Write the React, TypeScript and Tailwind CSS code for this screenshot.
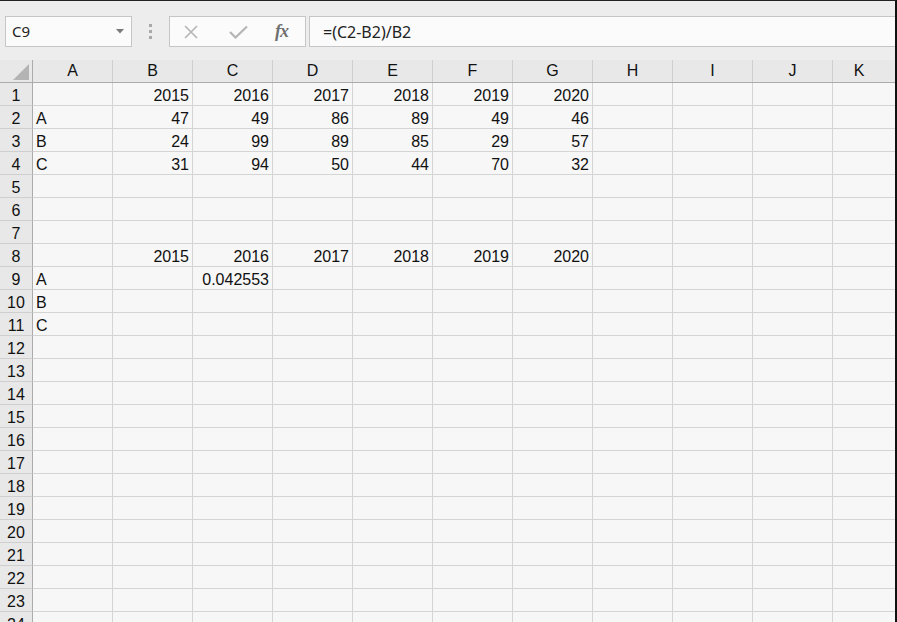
import React from 'react';

const cols = ['A', 'B', 'C', 'D', 'E', 'F', 'G', 'H', 'I', 'J'];

// cell values keyed by row number; index 0 is column A
const data: Record<number, string[]> = {
    1: ['', '2015', '2016', '2017', '2018', '2019', '2020'],
    2: ['A', '47', '49', '86', '89', '49', '46'],
    3: ['B', '24', '99', '89', '85', '29', '57'],
    4: ['C', '31', '94', '50', '44', '70', '32'],
    8: ['', '2015', '2016', '2017', '2018', '2019', '2020'],
    9: ['A', '', '0.042553'],
    10: ['B'],
    11: ['C'],
};

const rows = Array.from({ length: 24 }, (_, i) => i + 1);

const isNumber = (v: string) => v !== '' && !isNaN(Number(v));

function Cell({ value }: { value?: string }) {
    const v = value ?? '';
    return (
        <div
            className={`w-[80px] h-[23px] shrink-0 border-r border-b border-[#d4d4d4] flex items-end leading-none pb-px px-[3px] text-[16px] text-[#111] whitespace-nowrap ${
                isNumber(v) ? 'justify-end' : 'justify-start'
            }`}
        >
            {v}
        </div>
    );
}

export default function App() {
    return (
        <div className="w-[897px] h-[622px] overflow-hidden bg-[#f7f7f7] border-t border-[#222] border-r-2 border-r-[#111] font-['Liberation_Sans',Arial,sans-serif] flex flex-col">
            {/* Formula bar */}
            <div className="h-[59px] shrink-0 bg-[#ededed] flex items-start pt-[15px] pl-[5px]">
                <div className="w-[127px] h-[31px] bg-[#fbfbfb] border border-[#c6c6c6] flex items-center justify-between pl-[6px] pr-[7px]">
                    <span className="text-[15px] text-[#222] font-['Noto_Sans',sans-serif]">C9</span>
                    <svg width="8" height="5" viewBox="0 0 8 5">
                        <path d="M0 0h8L4 4.5z" fill="#7a7a7a" />
                    </svg>
                </div>
                <div className="w-[37px] h-[31px] flex flex-col items-center justify-center gap-[3px]">
                    <span className="w-[3px] h-[3px] bg-[#a8a8a8]" />
                    <span className="w-[3px] h-[3px] bg-[#a8a8a8]" />
                    <span className="w-[3px] h-[3px] bg-[#a8a8a8]" />
                </div>
                <div className="w-[137px] h-[31px] bg-[#fbfbfb] border border-[#c6c6c6] flex items-center">
                    <svg className="ml-[14px]" width="14" height="14" viewBox="0 0 14 14">
                        <path d="M1 1l12 12M13 1L1 13" stroke="#b5b5b5" strokeWidth="1.6" />
                    </svg>
                    <svg className="ml-[31px]" width="19" height="14" viewBox="0 0 19 14">
                        <path d="M1 7l5.5 5.5L18 1.5" stroke="#b5b5b5" strokeWidth="2.2" fill="none" />
                    </svg>
                    <span className="ml-[27px] text-[18px] italic font-bold text-[#707070] font-['Liberation_Serif',serif] tracking-[-1px]">
                        fx
                    </span>
                </div>
                <div className="flex-1 ml-[3px] h-[31px] bg-[#fbfbfb] border border-r-0 border-[#c6c6c6] flex items-center pl-[13px]">
                    <span className="text-[16px] text-[#222] font-['Noto_Sans',sans-serif]">=(C2-B2)/B2</span>
                </div>
            </div>

            {/* Column headers */}
            <div className="h-[23px] shrink-0 flex bg-[#e8e8e8] border-b border-[#ababab]">
                <div className="w-[33px] shrink-0 border-r border-[#ababab] flex items-end justify-end pr-[3px] pb-[2px]">
                    <svg width="16" height="16" viewBox="0 0 16 16">
                        <path d="M16 0V16H0z" fill="#b4b4b4" />
                    </svg>
                </div>
                {cols.map((c) => (
                    <div
                        key={c}
                        className="w-[80px] shrink-0 border-r border-[#cfcfcf] flex items-center justify-center text-[16px] text-[#111]"
                    >
                        {c}
                    </div>
                ))}
                <div className="flex-1 flex items-center justify-center text-[16px] text-[#111] pr-[10px]">K</div>
            </div>

            {/* Grid */}
            <div className="flex flex-col">
                {rows.map((r) => {
                    const vals = data[r] ?? [];
                    return (
                        <div key={r} className="flex shrink-0">
                            <div className="w-[33px] h-[23px] shrink-0 bg-[#e8e8e8] border-r border-r-[#ababab] border-b border-b-[#cfcfcf] flex items-end justify-center leading-none pb-px text-[16px] text-[#111]">
                                {r}
                            </div>
                            {cols.map((c, i) => (
                                <Cell key={c} value={vals[i]} />
                            ))}
                            <div className="flex-1 h-[23px] border-b border-[#d4d4d4]" />
                        </div>
                    );
                })}
            </div>
        </div>
    );
}
